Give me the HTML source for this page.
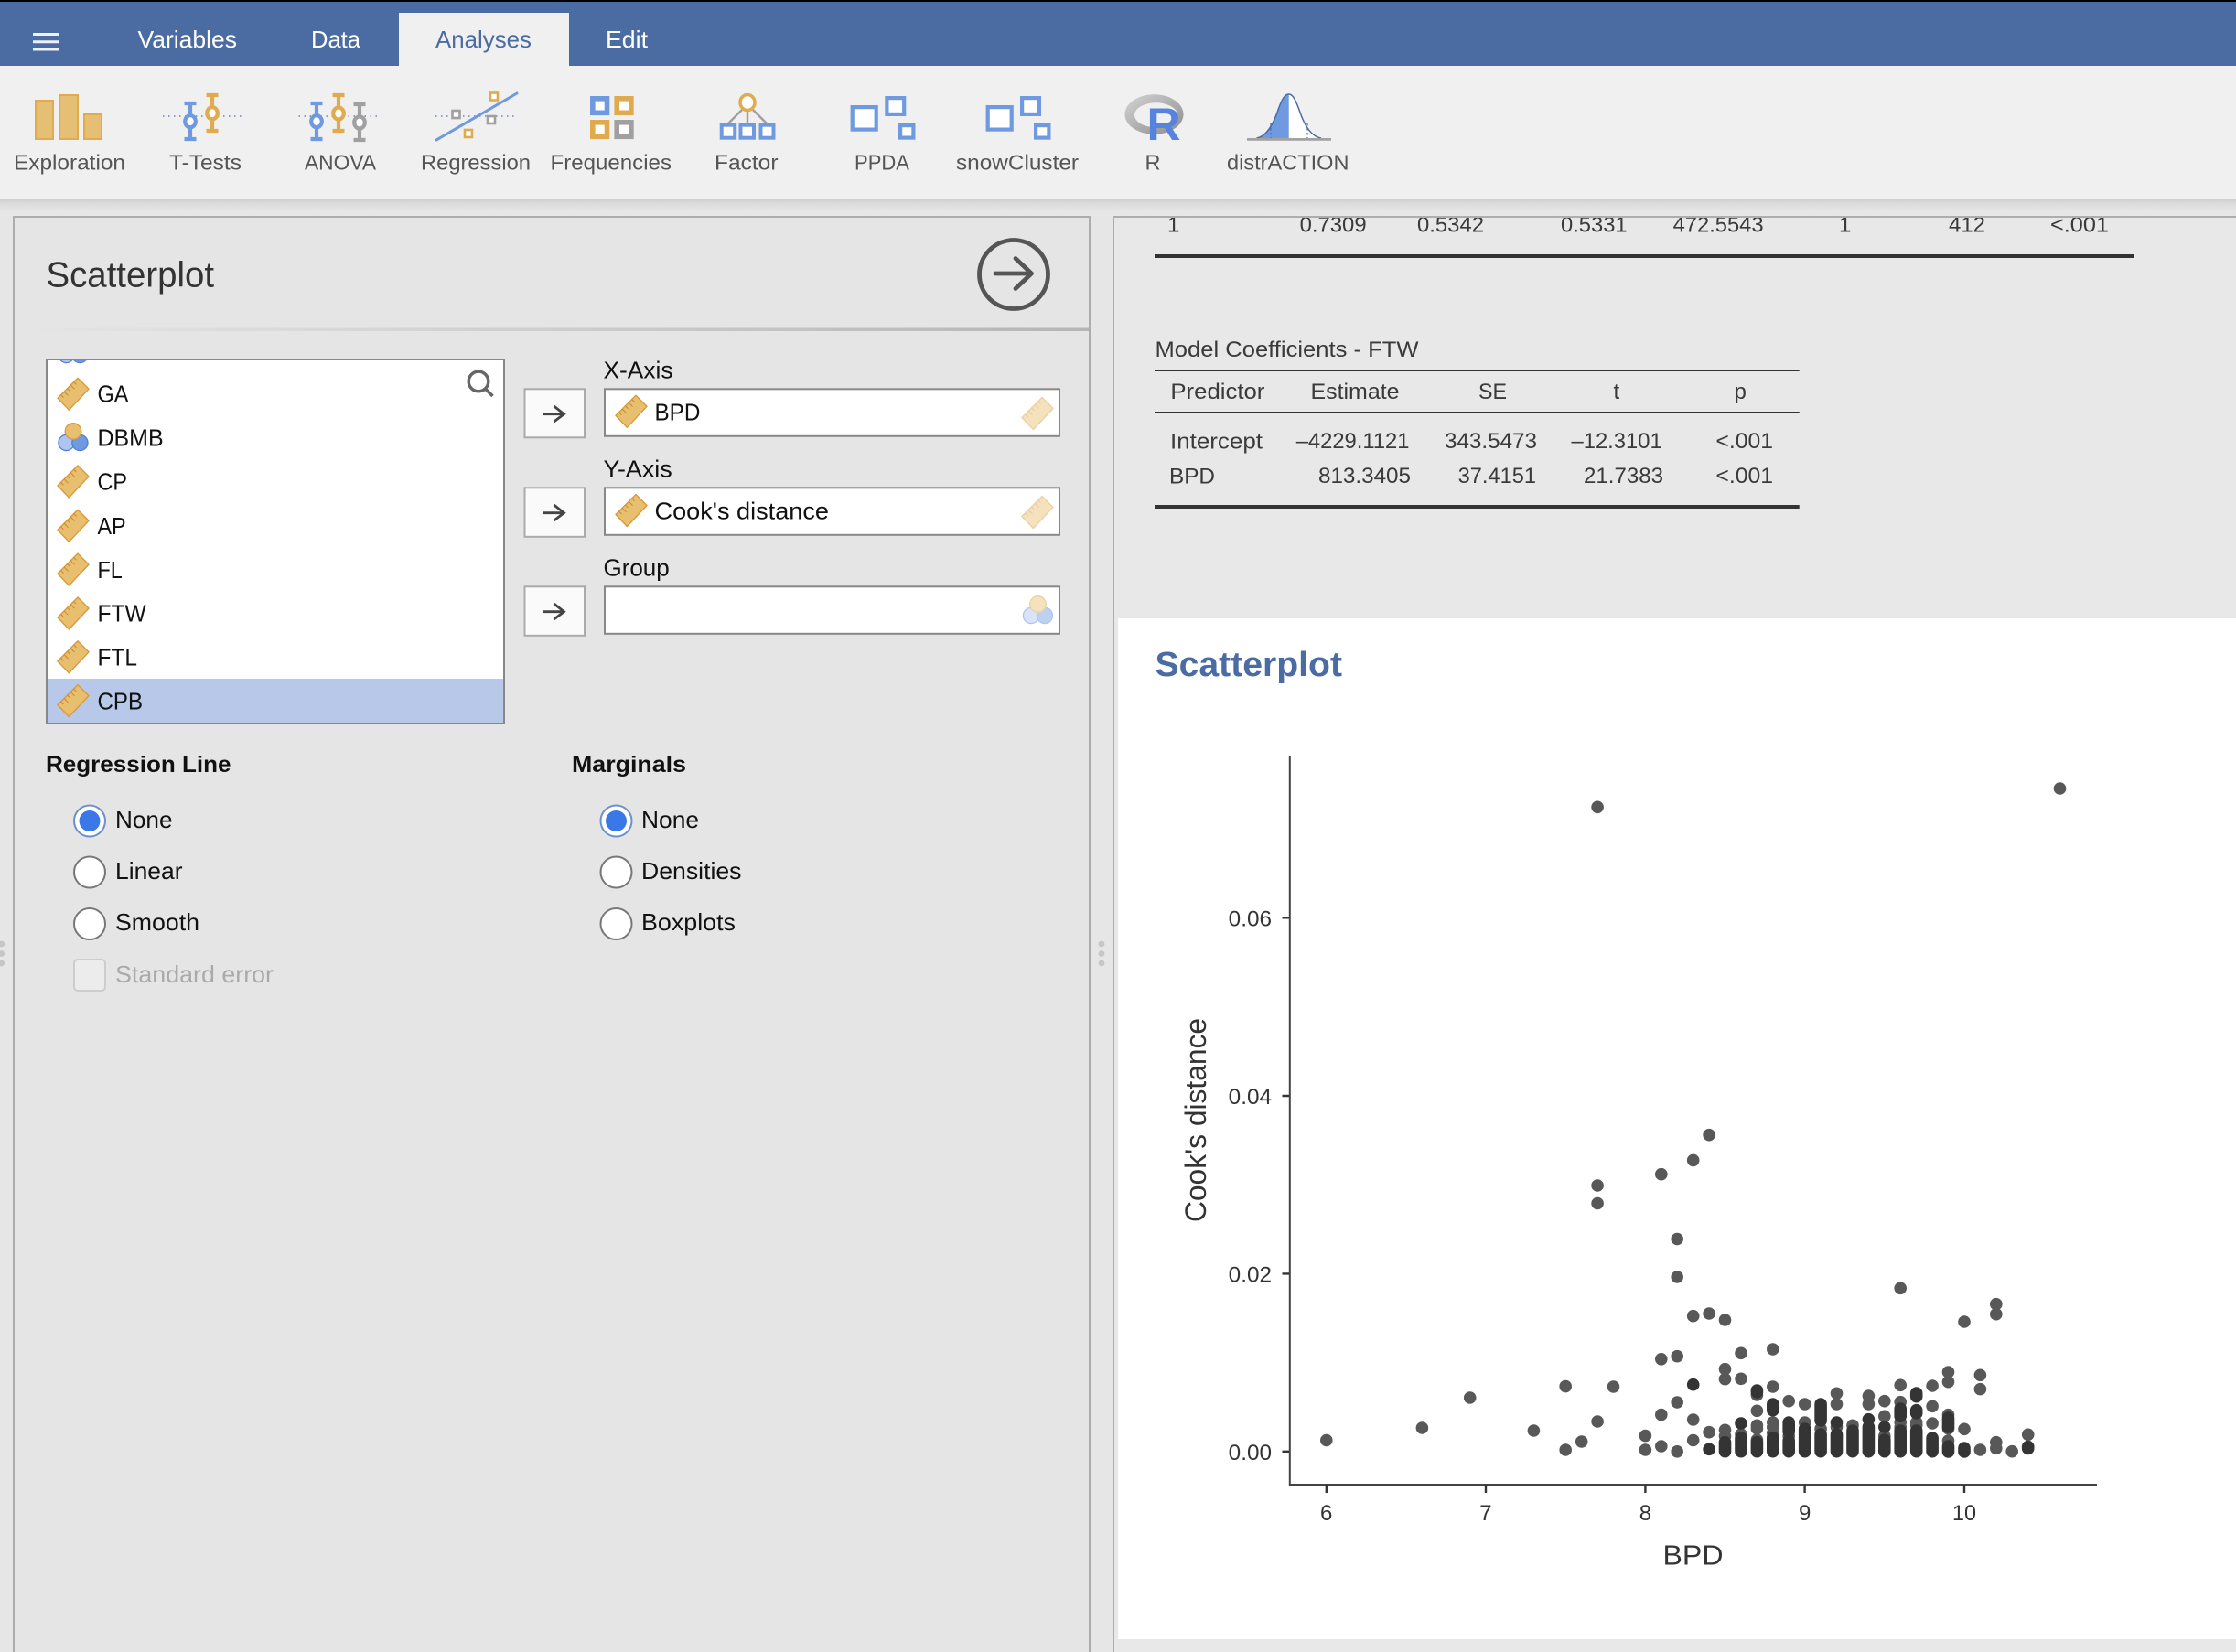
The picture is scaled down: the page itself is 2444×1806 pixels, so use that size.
<!DOCTYPE html>
<html lang="en"><head><meta charset="utf-8"><title>Scatterplot</title>
<style>
html,body{margin:0;padding:0;background:#e6e6e6;width:2444px;height:1806px;overflow:hidden}
svg{display:block;font-family:"Liberation Sans",Arial,sans-serif}
.tab{font-size:26px;fill:#fff}
.tb{font-size:23.5px;fill:#555}
.v{font-size:25.5px;fill:#111}
.t{font-size:24px;fill:#3a3a3a}
.o{font-size:26px;fill:#111}
.ax{font-size:24px;fill:#333}
</style></head><body>
<svg width="2444" height="1806" viewBox="0 0 2444 1806" xmlns="http://www.w3.org/2000/svg">
<defs>
<linearGradient id="sh" x1="0" y1="0" x2="0" y2="1"><stop offset="0" stop-color="#cfcfcf"/><stop offset=".3" stop-color="#dcdcdc"/><stop offset="1" stop-color="#e6e6e6"/></linearGradient>
<linearGradient id="dv" x1="0" y1="0" x2="1" y2="0"><stop offset="0" stop-color="#e5e5e5"/><stop offset="1" stop-color="#b5b5b5"/></linearGradient>
<linearGradient id="rg" x1="0" y1="0" x2="1" y2="1"><stop offset="0" stop-color="#d4d4d4"/><stop offset="1" stop-color="#8c8c8c"/></linearGradient>
<symbol id="r" overflow="visible"><polygon points="5,-17.5 17,-5.5 -4.6,17.5 -17,4.5" fill="#e8bf6f" stroke="#d99a3a" stroke-width="1.4" stroke-linejoin="round"/><path d="M-13.5 1l3 3M-10 -2.7l4.5 4.5M-6.5 -6.2l3 3M-3 -9.8l4.5 4.5M.5 -13.3l3 3" stroke="#c48a35" stroke-width="1" fill="none"/></symbol>
<symbol id="n" overflow="visible"><circle cx="-7.5" cy="8" r="8.6" fill="#aec5f0" stroke="#4f7fd8" stroke-width="1.3"/><circle cx="7.4" cy="8" r="8.6" fill="#6f9ae0" stroke="#4f7fd8" stroke-width="1.3"/><circle cx="0" cy="-4.5" r="8.8" fill="#e8bf6f" stroke="#d99a3a" stroke-width="1.3"/></symbol>
<clipPath id="lc"><rect x="52" y="394" width="498" height="396"/></clipPath>
<clipPath id="rc"><rect x="1218" y="238" width="1226" height="100"/></clipPath>
</defs>

<rect width="2444" height="1806" fill="#e6e6e6"/>

<!-- header -->
<rect width="2444" height="72" fill="#4a6ca3"/>
<rect width="2444" height="2" fill="#000"/>
<rect x="436" y="14" width="186" height="60" fill="#f0f0f0"/>
<path d="M36 37.5h29M36 45.8h29M36 54h29" stroke="#eef2f8" stroke-width="3" fill="none"/>
<text class="tab" x="150.5" y="52" textLength="108.5" lengthAdjust="spacingAndGlyphs">Variables</text>
<text class="tab" x="340" y="52" textLength="54" lengthAdjust="spacingAndGlyphs">Data</text>
<text class="tab" x="476" y="52" textLength="105" lengthAdjust="spacingAndGlyphs" style="fill:#4a6ca3">Analyses</text>
<text class="tab" x="662" y="52" textLength="46" lengthAdjust="spacingAndGlyphs">Edit</text>

<!-- toolbar -->
<rect y="72" width="2444" height="146" fill="#f0f0f0"/>
<rect y="218" width="2444" height="14" fill="url(#sh)"/>

<!-- exploration -->
<g fill="#e5bf74" stroke="#e0ab4f" stroke-width="2"><rect x="39" y="110" width="19" height="42"/><rect x="65" y="104" width="20" height="48"/><rect x="92" y="125" width="19" height="27"/></g>

<!-- t-tests -->
<path d="M178 127H268" stroke="#6a84b0" stroke-width="1.5" stroke-dasharray="1.5 4.5" fill="none"/>
<g fill="#fff" stroke-width="4.2">
<path d="M208 111V154M201.5 113H214.5M201.5 152H214.5" stroke="#6f9ae0" fill="none"/><ellipse cx="208" cy="132.7" rx="5.8" ry="6.5" stroke="#6f9ae0"/>
<path d="M232 102V145M225.5 104H238.5M225.5 143H238.5" stroke="#e0ab4f" fill="none"/><ellipse cx="232" cy="123.7" rx="5.8" ry="6.5" stroke="#e0ab4f"/>
</g>

<!-- anova -->
<path d="M326.5 127H416" stroke="#6a84b0" stroke-width="1.5" stroke-dasharray="1.5 4.5" fill="none"/>
<g fill="#fff" stroke-width="4.2">
<path d="M346 111V154M339.5 113H352.5M339.5 152H352.5" stroke="#6f9ae0" fill="none"/><ellipse cx="346" cy="132.7" rx="5.8" ry="6.5" stroke="#6f9ae0"/>
<path d="M370 102V145M363.5 104H376.5M363.5 143H376.5" stroke="#e0ab4f" fill="none"/><ellipse cx="370" cy="124" rx="5.8" ry="6.5" stroke="#e0ab4f"/>
<path d="M393 112V155M386.5 114H399.5M386.5 153H399.5" stroke="#a0a0a0" fill="none"/><ellipse cx="393" cy="134" rx="5.8" ry="6.5" stroke="#a0a0a0"/>
</g>

<!-- regression -->
<path d="M476 127H566" stroke="#6a84b0" stroke-width="1.5" stroke-dasharray="1.5 4.5" fill="none"/>
<path d="M477 153L565 102" stroke="#6f9ae0" stroke-width="3" fill="none" stroke-linecap="round"/>
<g fill="#fff" stroke-width="2.6">
<rect x="536" y="101.5" width="8" height="8" stroke="#e0ab4f"/><rect x="494.5" y="121" width="8" height="8" stroke="#a0a0a0"/><rect x="533" y="127" width="8" height="8" stroke="#a0a0a0"/><rect x="508" y="142" width="8" height="8" stroke="#e0ab4f"/>
</g>

<!-- frequencies -->
<g fill="#fff" stroke-width="5.6">
<rect x="647.8" y="107.8" width="15.7" height="15.5" stroke="#6f9ae0"/><rect x="674.2" y="107.8" width="15.7" height="15.5" stroke="#e0ab4f"/><rect x="647.8" y="133.8" width="15.7" height="15.5" stroke="#e0ab4f"/><rect x="674.2" y="133.8" width="15.7" height="15.5" stroke="#a0a0a0"/>
</g>

<!-- factor -->
<path d="M811 120L796 135M817 122V135M823 120L838 135" stroke="#a0a0a0" stroke-width="2.5" fill="none"/>
<ellipse cx="817" cy="112" rx="8" ry="8.5" fill="#fff" stroke="#e0ab4f" stroke-width="3.5"/>
<g fill="#fff" stroke="#6f9ae0" stroke-width="4"><rect x="788.7" y="136.7" width="14.5" height="14"/><rect x="809.5" y="136.7" width="14.5" height="14"/><rect x="831.5" y="136.7" width="14" height="14"/></g>

<!-- ppda -->
<g fill="#fff" stroke="#6f9ae0" stroke-width="4.2">
<rect x="931.7" y="117.1" width="26" height="24.5"/><rect x="969.4" y="107.1" width="18.8" height="17.8"/><rect x="984.1" y="137.1" width="14.3" height="13.5"/>
<rect x="1079.7" y="117.1" width="26" height="24.5"/><rect x="1117.1" y="107.1" width="18.8" height="17.8"/><rect x="1132.1" y="137.1" width="14.3" height="13.5"/>
</g>

<!-- R -->
<path fill-rule="evenodd" fill="url(#rg)" d="M1229.5 125a32 21.8 0 1 0 64 0a32 21.8 0 1 0 -64 0ZM1240 125.8a23.5 13.5 0 1 0 47 0a23.5 13.5 0 1 0 -47 0Z"/>
<text x="1253.5" y="153" font-size="50" font-weight="700" fill="#5583dd" textLength="37" lengthAdjust="spacingAndGlyphs">R</text>

<!-- distrACTION -->
<path d="M1408.7 103C1413 103 1416 109 1420 120C1425 135 1432 149 1444 151H1408.7Z" fill="#fff"/>
<path d="M1373.5 151C1385 149 1392 135 1397 120C1401 109 1404 103 1408.7 103V151Z" fill="#6f9ae0"/>
<path d="M1373.5 151C1385 149 1392 135 1397 120C1401 109 1404 103 1408.7 103C1413 103 1416 109 1420 120C1425 135 1432 149 1444 151" fill="none" stroke="#4a6ca3" stroke-width="1.5"/>
<path d="M1389 135V151M1429 135V151" stroke="#4a6ca3" stroke-width="1.2" stroke-dasharray="2.5 2.5" fill="none"/>
<rect x="1363" y="151" width="92" height="2.8" fill="#a3a3a3"/>

<!-- toolbar labels -->
<text class="tb" x="15" y="185.5" textLength="122" lengthAdjust="spacingAndGlyphs">Exploration</text>
<text class="tb" x="185" y="185.5" textLength="79" lengthAdjust="spacingAndGlyphs">T-Tests</text>
<text class="tb" x="333" y="185.5" textLength="78" lengthAdjust="spacingAndGlyphs">ANOVA</text>
<text class="tb" x="460" y="185.5" textLength="120" lengthAdjust="spacingAndGlyphs">Regression</text>
<text class="tb" x="601.5" y="185.5" textLength="132.5" lengthAdjust="spacingAndGlyphs">Frequencies</text>
<text class="tb" x="781" y="185.5" textLength="69.5" lengthAdjust="spacingAndGlyphs">Factor</text>
<text class="tb" x="934" y="185.5" textLength="60" lengthAdjust="spacingAndGlyphs">PPDA</text>
<text class="tb" x="1045" y="185.5" textLength="134" lengthAdjust="spacingAndGlyphs">snowCluster</text>
<text class="tb" x="1251.5" y="185.5">R</text>
<text class="tb" x="1341" y="185.5" textLength="133.5" lengthAdjust="spacingAndGlyphs">distrACTION</text>

<!-- options panel -->
<rect x="15" y="237" width="1176" height="1569" fill="#e5e5e5"/>
<path d="M15 1806V237H1191V1806" fill="none" stroke="#adadad" stroke-width="2"/>
<rect x="30" y="358.5" width="1160" height="3.5" fill="url(#dv)"/>
<text x="50.5" y="313.4" font-size="38.5" fill="#333" textLength="183.5" lengthAdjust="spacingAndGlyphs">Scatterplot</text>
<ellipse cx="1108" cy="300" rx="37.5" ry="37.5" fill="none" stroke="#555" stroke-width="4.8"/>
<path d="M1088 299H1127M1110 282.5L1127.5 299L1110 315.5" fill="none" stroke="#555" stroke-width="4.8" stroke-linecap="round" stroke-linejoin="round"/>

<!-- splitter dots -->
<g fill="#c6c6c6"><circle cx="1.7" cy="1032" r="3.4"/><circle cx="1.7" cy="1042.5" r="3.4"/><circle cx="1.7" cy="1053" r="3.4"/><circle cx="1204" cy="1032" r="3.4"/><circle cx="1204" cy="1042.5" r="3.4"/><circle cx="1204" cy="1053" r="3.4"/></g>

<!-- variable list -->
<rect x="51" y="393" width="500" height="398" fill="#fff" stroke="#888" stroke-width="2"/>
<rect x="52" y="742" width="498" height="48" fill="#b7c8e9"/>
<g clip-path="url(#lc)">
<use href="#n" x="80" y="380"/>
<use href="#r" x="80" y="430.7"/><use href="#n" x="80" y="476"/><use href="#r" x="80" y="526.4"/><use href="#r" x="80" y="574.8"/><use href="#r" x="80" y="622.6"/><use href="#r" x="80" y="670.5"/><use href="#r" x="80" y="718.3"/><use href="#r" x="80" y="766.1"/>
</g>
<text class="v" x="106.5" y="439.7" textLength="33.8" lengthAdjust="spacingAndGlyphs">GA</text>
<text class="v" x="106.5" y="487.6" textLength="72.1" lengthAdjust="spacingAndGlyphs">DBMB</text>
<text class="v" x="106.5" y="535.4" textLength="32.5" lengthAdjust="spacingAndGlyphs">CP</text>
<text class="v" x="106.5" y="584" textLength="31.1" lengthAdjust="spacingAndGlyphs">AP</text>
<text class="v" x="106.5" y="631.8" textLength="27.3" lengthAdjust="spacingAndGlyphs">FL</text>
<text class="v" x="106.5" y="679.7" textLength="53.3" lengthAdjust="spacingAndGlyphs">FTW</text>
<text class="v" x="106.5" y="727.5" textLength="43.4" lengthAdjust="spacingAndGlyphs">FTL</text>
<text class="v" x="106.5" y="775.3" textLength="49.5" lengthAdjust="spacingAndGlyphs">CPB</text>
<circle cx="523" cy="417" r="10.8" fill="none" stroke="#666" stroke-width="3.4"/>
<path d="M530.5 425L538.5 433" stroke="#666" stroke-width="3.6" fill="none"/>

<!-- arrow buttons -->
<g fill="#fafafa" stroke="#aaa" stroke-width="2"><rect x="573.5" y="425.3" width="65.5" height="53"/><rect x="573.5" y="533.3" width="65.5" height="53.5"/><rect x="573.5" y="641.3" width="65.5" height="53.5"/></g>
<g fill="none" stroke="#444" stroke-width="2.8"><path d="M594 452.7H616.5M605.5 444L616.5 452.7L605.5 461"/><path d="M594 560.7H616.5M605.5 552L616.5 560.7L605.5 569"/><path d="M594 668.7H616.5M605.5 660L616.5 668.7L605.5 677"/></g>

<!-- supplier targets -->
<text class="o" x="659.5" y="413.7" textLength="76" lengthAdjust="spacingAndGlyphs">X-Axis</text>
<text class="o" x="659.5" y="521.7" textLength="75.2" lengthAdjust="spacingAndGlyphs">Y-Axis</text>
<text class="o" x="659.5" y="629.3" textLength="72.2" lengthAdjust="spacingAndGlyphs">Group</text>
<g fill="#fff" stroke="#888" stroke-width="2"><rect x="661" y="425.3" width="497" height="51.5"/><rect x="661" y="533.3" width="497" height="51.5"/><rect x="661" y="641.3" width="497" height="51.5"/></g>
<use href="#r" x="690" y="449.8"/><use href="#r" x="690" y="558"/>
<g opacity=".45"><use href="#r" x="1134" y="452"/><use href="#r" x="1134" y="560"/><use href="#n" x="1134.5" y="665"/></g>
<text class="o" x="715.5" y="459.3" textLength="49.9" lengthAdjust="spacingAndGlyphs">BPD</text>
<text class="o" x="715.5" y="567.7" textLength="190.5" lengthAdjust="spacingAndGlyphs">Cook's distance</text>

<!-- regression line / marginals -->
<text class="o" x="50" y="844" style="font-weight:700;font-size:25px" textLength="202.5" lengthAdjust="spacingAndGlyphs">Regression Line</text>
<text class="o" x="625" y="844" style="font-weight:700;font-size:25px" textLength="125" lengthAdjust="spacingAndGlyphs">Marginals</text>
<g fill="#fff" stroke="#777" stroke-width="2">
<circle cx="98" cy="897.5" r="17" stroke="#6b8fcf"/><circle cx="98" cy="953.5" r="17"/><circle cx="98" cy="1010" r="17"/>
<circle cx="673.5" cy="897.5" r="17" stroke="#6b8fcf"/><circle cx="673.5" cy="953.5" r="17"/><circle cx="673.5" cy="1010" r="17"/>
</g>
<circle cx="98" cy="897.5" r="11.5" fill="#3b78e7"/><circle cx="673.5" cy="897.5" r="11.5" fill="#3b78e7"/>
<rect x="81" y="1049" width="34" height="34" rx="4" fill="#ececec" stroke="#cdcdcd" stroke-width="2"/>
<text class="o" x="126" y="905" textLength="62.5" lengthAdjust="spacingAndGlyphs">None</text>
<text class="o" x="126" y="961" textLength="73.5" lengthAdjust="spacingAndGlyphs">Linear</text>
<text class="o" x="126" y="1017" textLength="92" lengthAdjust="spacingAndGlyphs">Smooth</text>
<text class="o" x="126" y="1073.8" style="fill:#aaa" textLength="173" lengthAdjust="spacingAndGlyphs">Standard error</text>
<text class="o" x="701" y="905" textLength="63" lengthAdjust="spacingAndGlyphs">None</text>
<text class="o" x="701" y="961" textLength="109.5" lengthAdjust="spacingAndGlyphs">Densities</text>
<text class="o" x="701" y="1017" textLength="103" lengthAdjust="spacingAndGlyphs">Boxplots</text>

<!-- results panel -->
<rect x="1217" y="237" width="1227" height="1569" fill="#e8e8e8"/>
<path d="M1217 1806V237H2444" fill="none" stroke="#adadad" stroke-width="2"/>
<g clip-path="url(#rc)">
<text class="t" x="1276" y="253.3">1</text>
<text class="t" x="1420.6" y="253.3" textLength="73" lengthAdjust="spacingAndGlyphs">0.7309</text>
<text class="t" x="1549" y="253.3" textLength="73" lengthAdjust="spacingAndGlyphs">0.5342</text>
<text class="t" x="1706" y="253.3" textLength="72.6" lengthAdjust="spacingAndGlyphs">0.5331</text>
<text class="t" x="1828.6" y="253.3" textLength="99" lengthAdjust="spacingAndGlyphs">472.5543</text>
<text class="t" x="2010" y="253.3">1</text>
<text class="t" x="2130" y="253.3" textLength="40" lengthAdjust="spacingAndGlyphs">412</text>
<text class="t" x="2241" y="253.3" textLength="64" lengthAdjust="spacingAndGlyphs">&lt;.001</text>
</g>
<rect x="1262" y="278" width="1070.5" height="4" fill="#333"/>
<text class="t" x="1262.5" y="390" textLength="288" lengthAdjust="spacingAndGlyphs">Model Coefficients - FTW</text>
<rect x="1262" y="404" width="704.7" height="2" fill="#333"/>
<text class="t" x="1279.4" y="436" textLength="103" lengthAdjust="spacingAndGlyphs">Predictor</text>
<text class="t" x="1432.5" y="436" textLength="97" lengthAdjust="spacingAndGlyphs">Estimate</text>
<text class="t" x="1616" y="436" textLength="31" lengthAdjust="spacingAndGlyphs">SE</text>
<text class="t" x="1763.5" y="436">t</text>
<text class="t" x="1895.5" y="436">p</text>
<rect x="1262" y="450" width="704.7" height="2" fill="#333"/>
<text class="t" x="1279" y="490.7" textLength="101" lengthAdjust="spacingAndGlyphs">Intercept</text>
<text class="t" x="1416.7" y="490" textLength="123.8" lengthAdjust="spacingAndGlyphs">&#8211;4229.1121</text>
<text class="t" x="1579" y="490" textLength="101" lengthAdjust="spacingAndGlyphs">343.5473</text>
<text class="t" x="1717.5" y="490" textLength="99.2" lengthAdjust="spacingAndGlyphs">&#8211;12.3101</text>
<text class="t" x="1875.4" y="490" textLength="62.6" lengthAdjust="spacingAndGlyphs">&lt;.001</text>
<text class="t" x="1278" y="528.7" textLength="50" lengthAdjust="spacingAndGlyphs">BPD</text>
<text class="t" x="1441" y="528" textLength="101" lengthAdjust="spacingAndGlyphs">813.3405</text>
<text class="t" x="1593.6" y="528" textLength="85.4" lengthAdjust="spacingAndGlyphs">37.4151</text>
<text class="t" x="1731" y="528" textLength="87" lengthAdjust="spacingAndGlyphs">21.7383</text>
<text class="t" x="1875.4" y="528" textLength="62.6" lengthAdjust="spacingAndGlyphs">&lt;.001</text>
<rect x="1262" y="552" width="704.7" height="4" fill="#333"/>

<!-- plot card -->
<rect x="1222" y="676" width="1222" height="1116" fill="#fff"/>
<text x="1262.5" y="739" font-size="38" font-weight="700" fill="#4a6ca3" textLength="204.5" lengthAdjust="spacingAndGlyphs">Scatterplot</text>

<!-- axes -->
<path d="M1409.8 826V1623H2292" fill="none" stroke="#444" stroke-width="2"/>
<path d="M1401.5 1003.3H1409M1401.5 1198H1409M1401.5 1392.4H1409M1401.5 1586.8H1409M1449.8 1623V1632M1624 1623V1632M1798.4 1623V1632M1972.6 1623V1632M2147 1623V1632" fill="none" stroke="#333" stroke-width="2.4"/>
<text class="ax" x="1342.7" y="1012.3" textLength="47.3" lengthAdjust="spacingAndGlyphs">0.06</text>
<text class="ax" x="1342.7" y="1206.8" textLength="47.3" lengthAdjust="spacingAndGlyphs">0.04</text>
<text class="ax" x="1342.7" y="1401.3" textLength="47.3" lengthAdjust="spacingAndGlyphs">0.02</text>
<text class="ax" x="1342.7" y="1595.8" textLength="47.3" lengthAdjust="spacingAndGlyphs">0.00</text>
<text class="ax" x="1443" y="1661.8">6</text>
<text class="ax" x="1617.3" y="1661.8">7</text>
<text class="ax" x="1791.7" y="1661.8">8</text>
<text class="ax" x="1966" y="1661.8">9</text>
<text class="ax" x="2134" y="1661.8" textLength="26" lengthAdjust="spacingAndGlyphs">10</text>
<text x="1817.5" y="1710.7" font-size="31" fill="#333" textLength="66" lengthAdjust="spacingAndGlyphs">BPD</text>
<text transform="translate(1318 1336) rotate(-90)" font-size="32" fill="#333" textLength="223" lengthAdjust="spacingAndGlyphs">Cook's distance</text>

<!-- points -->
<path fill="none" stroke="#585858" stroke-width="13.6" stroke-linecap="round" d="
M1449.8 1574.5h0M1554.4 1561h0M1606.7 1528h0M1676.4 1564h0
M1711.2 1585h0M1711.2 1515.6h0M1728.7 1576h0
M1746.1 1554h0M1746.1 1315.5h0M1746.1 1296h0M1746.1 882.3h0M1763.5 1516h0
M1798.4 1585h0M1798.4 1569.6h0
M1815.8 1581h0M1815.8 1546.6h0M1815.8 1485.8h0M1815.8 1283.7h0
M1833.2 1586.8h0M1833.2 1533h0M1833.2 1482.7h0M1833.2 1396h0M1833.2 1354.5h0
M1850.7 1574.5h0M1850.7 1552h0M1850.7 1438.7h0M1850.7 1268.4h0
M1868.1 1240.7h0M1868.1 1436h0M1868.1 1565.7h0
M1885.5 1443h0M1885.5 1496.7h0M1885.5 1507.7h0M1885.5 1563.3h0M1885.5 1570h0
M1903 1479.3h0M1903 1507.3h0M1903 1568h0
M1920.4 1525h0M1920.4 1542.3h0M1920.4 1558.3h0M1920.4 1561.7h0M1920.4 1574h0
M1937.8 1475h0M1937.8 1516h0M1937.8 1555h0M1937.8 1560h0M1937.8 1566.7h0
M1955.2 1531.7h0M1955.2 1570h0
M1972.7 1535h0M1972.7 1555h0
M1990.1 1562h0
M2007.5 1523.3h0M2007.5 1535h0M2007.5 1560h0
M2025 1558.3h0
M2042.4 1526h0M2042.4 1535h0
M2059.8 1531.7h0M2059.8 1548.3h0M2059.8 1570h0
M2077.2 1408.3h0M2077.2 1514.3h0M2077.2 1532.7h0M2077.2 1555h0M2077.2 1560h0
M2094.7 1555h0M2094.7 1558h0
M2112.1 1515h0M2112.1 1537.3h0M2112.1 1556h0
M2129.5 1500h0M2129.5 1510.7h0M2129.5 1546.7h0M2129.5 1561.7h0M2129.5 1575h0
M2147 1445h0M2147 1562.3h0
M2164.4 1503.3h0M2164.4 1518.7h0M2164.4 1585h0
M2181.8 1425.7h0M2181.8 1436.7h0M2181.8 1576.7h0M2181.8 1583.3h0
M2199.2 1586.7h0M2216.7 1568.3h0M2216.7 1581.7h0M2251.5 862h0"/>
<path fill="none" stroke="#343434" stroke-width="13.6" stroke-linecap="round" d="
M1850.7 1513.7h0M1868.1 1584.3h0
M1885.5 1576.7V1586.7
M1903 1556h0M1903 1572V1586.7
M1920.4 1520V1522M1920.4 1576.7V1586.7
M1937.8 1535V1541.7M1937.8 1571.7V1586.7
M1955.2 1555V1565M1955.2 1575V1586.7
M1972.7 1562V1586.7
M1990.1 1535V1553M1990.1 1568V1586.7
M2007.5 1555h0M2007.5 1568V1586.7
M2025 1564V1586.7
M2042.4 1551.7h0M2042.4 1560V1586.7
M2059.8 1560h0M2059.8 1574V1586.7
M2077.2 1540V1548.3M2077.2 1564V1586.7
M2094.7 1523V1526.7M2094.7 1541.7V1545M2094.7 1564V1586.7
M2112.1 1572V1586.7
M2129.5 1550V1560M2129.5 1581V1587
M2147 1583V1587
M2216.7 1581.7V1583.5"/>
</svg>
</body></html>
